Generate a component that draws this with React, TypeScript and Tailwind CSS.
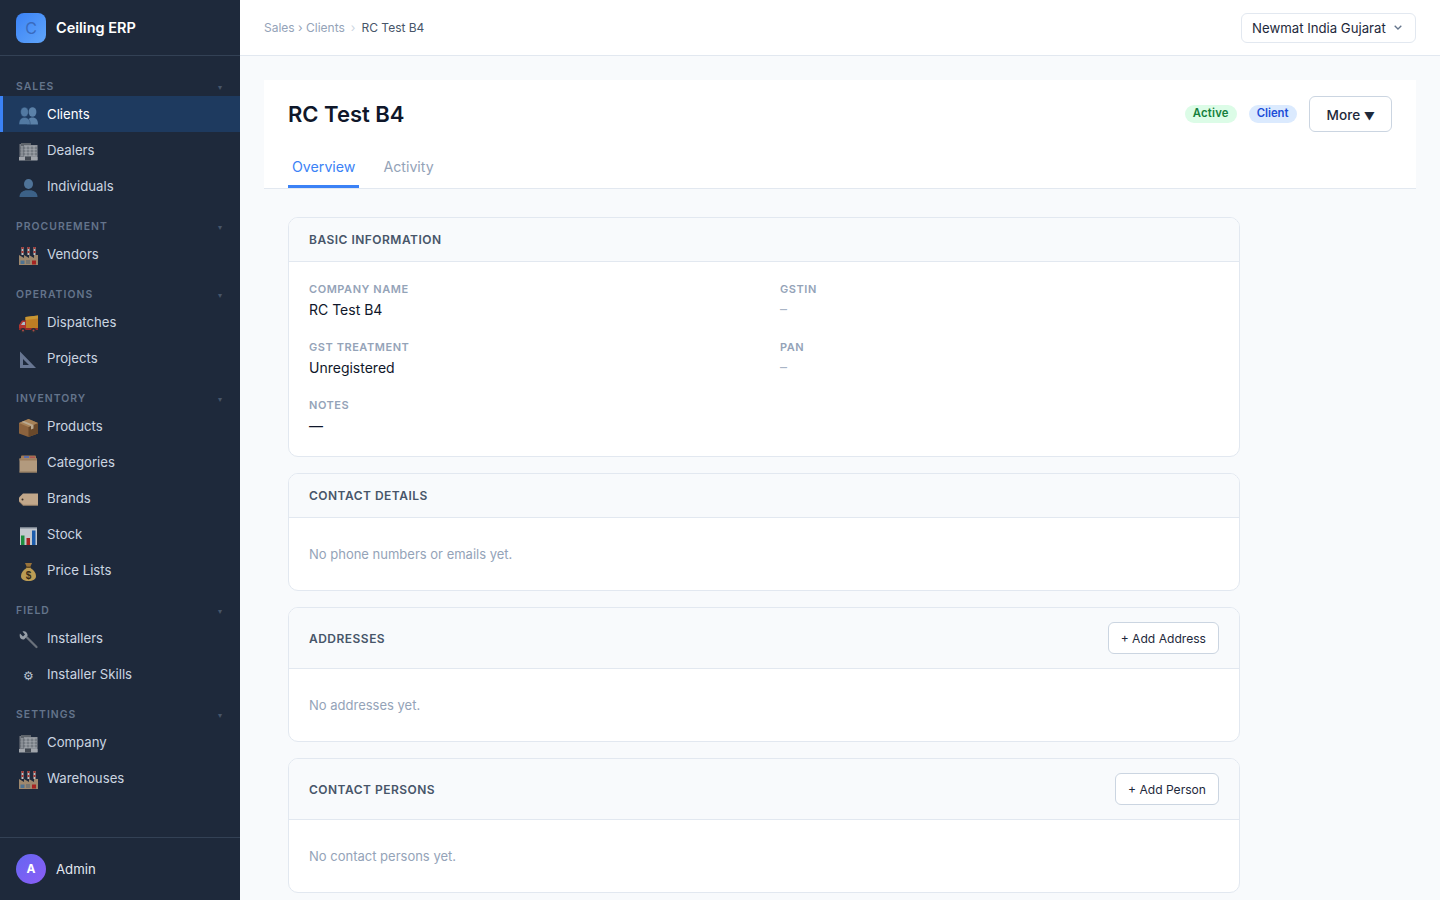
import type { ReactNode } from "react";

const Svg = ({ children }: { children: ReactNode }) => (
  <svg viewBox="0 0 20 20" className="mt-1 h-5 w-5 opacity-80">{children}</svg>
);

const PeopleIcon = () => (
  <Svg>
    <g fill="#6b93bb">
      <ellipse cx="14.500" cy="6" rx="3.900" ry="4.800" />
      <path d="M9 18.500c0-4.600 2-7 5.500-7s5.500 2.400 5.500 7z" />
    </g>
    <g fill="#5f89b3" stroke="#1e3a5f" strokeWidth=".4">
      <ellipse cx="6.500" cy="6" rx="3.900" ry="4.800" />
      <path d="M1 18.500c0-4.600 2-7 5.500-7s5.800 2.400 5.800 7z" />
    </g>
  </Svg>
);

const PersonIcon = () => (
  <Svg>
    <ellipse cx="10.500" cy="6" rx="4.500" ry="5" fill="#5c86b0" />
    <path d="M1.500 19c0-4.500 3-5.800 6-6.800h6c3 1 6 2.300 6 6.800z" fill="#44709b" />
  </Svg>
);

const BuildingIcon = () => (
  <Svg>
    <rect x="1.500" y="2" width="11" height="16" fill="#8b8f94" />
    <rect x="3" y="1" width="10" height="3" fill="#6f7378" />
    <rect x="6" y="3" width="13.500" height="15" fill="#a9adb1" />
    <rect x="1" y="15" width="18.500" height="3.500" fill="#c2c5c8" />
    <rect x="7" y="14.500" width="6" height="4" fill="#4b5057" />
    {[6, 9, 12].map((y) => (
      <path key={y} d={`M2 ${y}h17.500`} stroke="#71767c" strokeWidth="1" />
    ))}
    {[4, 8, 12, 16].map((x) => (
      <path key={x} d={`M${x} 4v10`} stroke="#d3d5d7" strokeWidth=".8" />
    ))}
  </Svg>
);

const FactoryIcon = () => (
  <Svg>
    {[3.500, 9.500, 15.500].map((x) => (
      <g key={x}>
        <rect x={x} y="1" width="2" height="8" fill="#efe6e0" />
        <rect x={x} y="1" width="2" height="2" fill="#c9372c" />
        <rect x={x} y="5" width="2" height="2" fill="#c9372c" />
      </g>
    ))}
    <path d="M1 19V9l5 3V9l5 3V9l5 3 .1-3L20 9v10z" fill="#bfa07a" />
    <rect x="2.500" y="14.500" width="4" height="3.500" fill="#5a85a8" />
    <rect x="8" y="14" width="4" height="4" fill="#8e8a80" />
    <rect x="14" y="14.500" width="4" height="4" fill="#c8241d" />
  </Svg>
);

const TruckIcon = () => (
  <Svg>
    <path d="M7.500 3 20 1.500V14H7.500z" fill="#e8931f" />
    <path d="M7.500 3 20 1.500v3L7.500 6z" fill="#f2b233" />
    <path d="M1 15v-4l3-4.500h4V15z" fill="#d63a2f" />
    <path d="M3 11l2-3h2v3z" fill="#cfe0ea" />
    <rect x="1" y="14" width="19" height="2" fill="#b62b24" />
    <circle cx="5" cy="16.500" r="2.500" fill="#2b2f36" />
    <circle cx="15.500" cy="16.500" r="2.500" fill="#2b2f36" />
    <circle cx="5" cy="16.500" r="1" fill="#d4524a" />
    <circle cx="15.500" cy="16.500" r="1" fill="#d4524a" />
  </Svg>
);

const SetSquareIcon = () => (
  <Svg>
    <path fillRule="evenodd" d="M2 1.500 18 18H2zM5 9v6h6z" fill="#7b8aa8" />
  </Svg>
);

const BoxIcon = () => (
  <Svg>
    <path d="M10.500 1 20 5v10.500L10.500 19 1 15.500V5z" fill="#a8723f" />
    <path d="M10.500 9 20 5v10.500L10.500 19z" fill="#7d5128" />
    <path d="M10.500 1 20 5l-9.500 4L1 5z" fill="#c9985f" />
    <path d="m6 3 9.500 4v3.500l-2.500 1V8L3.500 4z" fill="#e0c9a6" />
  </Svg>
);

const FileBoxIcon = () => (
  <Svg>
    <rect x="3" y="1.500" width="15" height="4" rx="1" fill="#c9925c" />
    <rect x="6" y="2" width="5" height="2" fill="#6d7fc4" />
    <rect x="12" y="2.500" width="5" height="2" fill="#d2605a" />
    <rect x="1.500" y="4.500" width="17.500" height="14" fill="#d8b78f" />
    <rect x="1.500" y="4.500" width="17.500" height="2" fill="#bd9468" />
    <rect x="1.500" y="17.500" width="17.500" height="1" fill="#a88762" />
  </Svg>
);

const TagIcon = () => (
  <Svg>
    <path d="M5 3.500h15v12H5l-4-4v-4z" fill="#ecc79e" />
    <circle cx="4.500" cy="9.500" r="1" fill="#41301f" />
    <path d="M1 11.500l4 4h15v-.8H5.300l-4.300-4z" fill="#b8946f" />
  </Svg>
);

const ChartIcon = () => (
  <Svg>
    <rect x="2" y="1.500" width="17" height="17.500" fill="#eef0f3" />
    <rect x="2" y="1.500" width="17" height="1" fill="#9aa3ad" />
    <rect x="3" y="9.500" width="3.500" height="9.500" fill="#1da53f" />
    <rect x="8.500" y="12" width="3.500" height="7" fill="#c9231f" />
    <rect x="14" y="4.500" width="3.500" height="14.500" fill="#1d69c9" />
  </Svg>
);

const MoneyIcon = () => (
  <Svg>
    <path d="M7 1h7l-1.800 4H8.800z" fill="#b8863a" />
    <rect x="8" y="4.500" width="5" height="1.500" fill="#6f4f1f" />
    <path d="M8.500 6h4c3.500 2 5.500 5 5.500 8 0 3.500-3 5-7.500 5S3 17.500 3 14c0-3 2-6 5.500-8z" fill="#e3b95b" />
    <text x="10.500" y="16.500" textAnchor="middle" fontSize="10" fontWeight="700" fontFamily="Liberation Sans, sans-serif" fill="#3e2c10">$</text>
  </Svg>
);

const WrenchIcon = () => (
  <Svg>
    <path d="M9 7.500 18.500 17" stroke="#7d838b" strokeWidth="2.200" strokeLinecap="round" />
    <path d="M2 3.500 5 6.500l2-2L4.500 1.500C7.500.5 10 3 9.500 6l-3.500 3.500C3 10 .8 7 2 3.500z" fill="#b6bcc3" />
  </Svg>
);

const GearIcon = () => <span className="mt-1 flex h-5 w-5 items-center justify-center text-[12px] leading-none text-[#b8c2cf]">⚙</span>;

const navGroups = [
  {
    title: "Sales",
    items: [
      { icon: <PeopleIcon />, label: "Clients", active: true },
      { icon: <BuildingIcon />, label: "Dealers" },
      { icon: <PersonIcon />, label: "Individuals" },
    ],
  },
  { title: "Procurement", items: [{ icon: <FactoryIcon />, label: "Vendors" }] },
  {
    title: "Operations",
    items: [
      { icon: <TruckIcon />, label: "Dispatches" },
      { icon: <SetSquareIcon />, label: "Projects" },
    ],
  },
  {
    title: "Inventory",
    items: [
      { icon: <BoxIcon />, label: "Products" },
      { icon: <FileBoxIcon />, label: "Categories" },
      { icon: <TagIcon />, label: "Brands" },
      { icon: <ChartIcon />, label: "Stock" },
      { icon: <MoneyIcon />, label: "Price Lists" },
    ],
  },
  {
    title: "Field",
    items: [
      { icon: <WrenchIcon />, label: "Installers" },
      { icon: <GearIcon />, label: "Installer Skills" },
    ],
  },
  {
    title: "Settings",
    items: [
      { icon: <BuildingIcon />, label: "Company" },
      { icon: <FactoryIcon />, label: "Warehouses" },
    ],
  },
];

const fields = [
  { label: "Company Name", value: "RC Test B4" },
  { label: "GSTIN", value: "" },
  { label: "GST Treatment", value: "Unregistered" },
  { label: "PAN", value: "" },
  { label: "Notes", value: "—" },
];

const Sidebar = () => (
  <aside className="flex h-full w-60 shrink-0 flex-col bg-[#1e293b]">
    <div className="flex h-14 shrink-0 items-center gap-2.5 border-b border-[#334155] px-4">
      <div className="flex h-[30px] w-[30px] items-center justify-center rounded-lg bg-gradient-to-br from-[#3b82f6] to-[#60a5fa] text-base text-[#3a6bbd]">
        C
      </div>
      <span className="mt-px text-[14.5px] font-semibold text-white">Ceiling ERP</span>
    </div>
    <nav className="flex-1 overflow-hidden pt-2">
      {navGroups.map((group) => (
        <div key={group.title}>
          <div className="flex h-8 items-end justify-between pb-px pl-4 pr-[18px]">
            <span className="text-[10.4px] leading-4 font-semibold tracking-[0.1em] text-[#64748b] uppercase">{group.title}</span>
            <span className="text-[8px] leading-4 text-[#475569]">▾</span>
          </div>
          {group.items.map((item) => (
            <div
              key={item.label}
              className={
                item.active
                  ? "flex h-9 items-center gap-[9px] border-l-[3px] border-[#3b82f6] bg-[#1e3a5f] pl-[15px] text-[13.2px] text-white"
                  : "flex h-9 items-center gap-[9px] border-l-[3px] border-transparent pl-[15px] text-[13.2px] text-[#cbd5e1]"
              }
            >
              {item.icon}
              <span className="mt-[2px]">{item.label}</span>
            </div>
          ))}
        </div>
      ))}
    </nav>
    <div className="flex h-[63px] shrink-0 items-center gap-2.5 border-t border-[#334155] px-4">
      <div className="flex h-[30px] w-[30px] items-center justify-center rounded-full bg-gradient-to-br from-[#6366f1] to-[#8b5cf6] text-xs font-bold text-white">
        A
      </div>
      <span className="mt-[2px] text-[13.2px] text-[#e2e8f0]">Admin</span>
    </div>
  </aside>
);

const Card = ({ title, action, children }: { title: string; action?: string; children: ReactNode }) => (
  <section className="overflow-hidden rounded-[10px] border border-[#e2e8f0] bg-white">
    <div className={action ? "flex items-center justify-between border-b border-[#e2e8f0] bg-[#f8fafc] px-5 py-3.5" : "flex h-11 items-center border-b border-[#e2e8f0] bg-[#f8fafc] px-5"}>
      <h3 className={action ? "mt-[2px] text-xs font-semibold tracking-[0.04em] text-[#475569] uppercase" : "text-xs font-semibold tracking-[0.04em] text-[#475569] uppercase"}>{title}</h3>
      {action && (
        <button className="h-8 rounded-md border border-[#cbd5e1] bg-white px-3 pt-px text-[12.1px] text-[#1e293b]">{action}</button>
      )}
    </div>
    {children}
  </section>
);

const Empty = ({ text }: { text: string }) => (
  <p className="px-5 py-[25.5px] text-[13px] leading-[21px] text-[#94a3b8]">{text}</p>
);

export default function App() {
  return (
    <div className="flex h-screen w-full overflow-hidden bg-[#f8fafc] font-[Inter,sans-serif]">
      <Sidebar />
      <div className="flex min-w-0 flex-1 flex-col">
        <header className="flex h-14 shrink-0 items-center justify-between border-b border-[#e2e8f0] bg-white px-6">
          <div className="flex items-center text-xs text-[#94a3b8]">
            <span>Sales › Clients</span>
            <span className="mx-[6px] text-[#cbd5e1]">›</span>
            <span className="text-[#475569]">RC Test B4</span>
          </div>
          <div className="flex h-[30px] w-[175px] items-center justify-between rounded-md border border-[#e2e8f0] bg-white pl-2.5 pr-[13px] text-[13.2px] whitespace-nowrap text-[#1e293b]">
            <span className="mt-[2px]">Newmat India Gujarat</span>
            <svg viewBox="0 0 8 5" className="h-[5px] w-2" fill="none" stroke="#64748b" strokeWidth="1.300">
              <path d="m.7.7 3.300 3.300 3.300-3.300" />
            </svg>
          </div>
        </header>
        <main className="flex-1 overflow-hidden p-6">
          <div className="border-b border-[#e2e8f0] bg-white px-6">
            <div className="flex items-center justify-between pt-4">
              <h1 className="text-[22px] font-semibold text-[#0f172a]">RC Test B4</h1>
              <div className="flex items-center gap-3">
                <span className="rounded-full bg-[#dcfce7] px-2 pt-px pb-[3px] text-[11.3px] leading-[14px] font-semibold tracking-[0.2px] text-[#15803d]">Active</span>
                <span className="rounded-full bg-[#dbeafe] px-2 pt-px pb-[3px] text-[11.3px] leading-[14px] font-semibold text-[#1d4ed8]">Client</span>
                <button className="h-9 rounded-md border border-[#cbd5e1] bg-white pt-[2px] pr-4 pl-[17px] text-[13.6px] font-medium text-[#1e293b]">
                  More <span className="text-[11px]">▼</span>
                </button>
              </div>
            </div>
            <div className="mt-6 flex gap-5 text-[14.2px]">
              <div className="border-b-[3px] border-[#3b82f6] px-1 pb-2 text-[#3b82f6]">Overview</div>
              <div className="px-1 pb-2 text-[#94a3b8]">Activity</div>
            </div>
          </div>
          <div className="mt-7 ml-6 flex w-[952px] flex-col gap-4">
            <Card title="Basic Information">
              <div className="grid grid-cols-2 gap-x-8 gap-y-5 px-5 py-5">
                {fields.map((f) => (
                  <div key={f.label}>
                    <div className="text-[11px] leading-[14px] font-semibold tracking-[0.05em] text-[#94a3b8] uppercase">{f.label}</div>
                    {f.value ? (
                      <div className="mt-[3px] text-sm leading-[21px] text-[#0f172a]">{f.value}</div>
                    ) : (
                      <div className="mt-[2px] mb-px text-sm leading-[21px] text-[#a9b5c6]">–</div>
                    )}
                  </div>
                ))}
              </div>
            </Card>
            <Card title="Contact Details">
              <Empty text="No phone numbers or emails yet." />
            </Card>
            <Card title="Addresses" action="+ Add Address">
              <Empty text="No addresses yet." />
            </Card>
            <Card title="Contact Persons" action="+ Add Person">
              <Empty text="No contact persons yet." />
            </Card>
          </div>
        </main>
      </div>
    </div>
  );
}
